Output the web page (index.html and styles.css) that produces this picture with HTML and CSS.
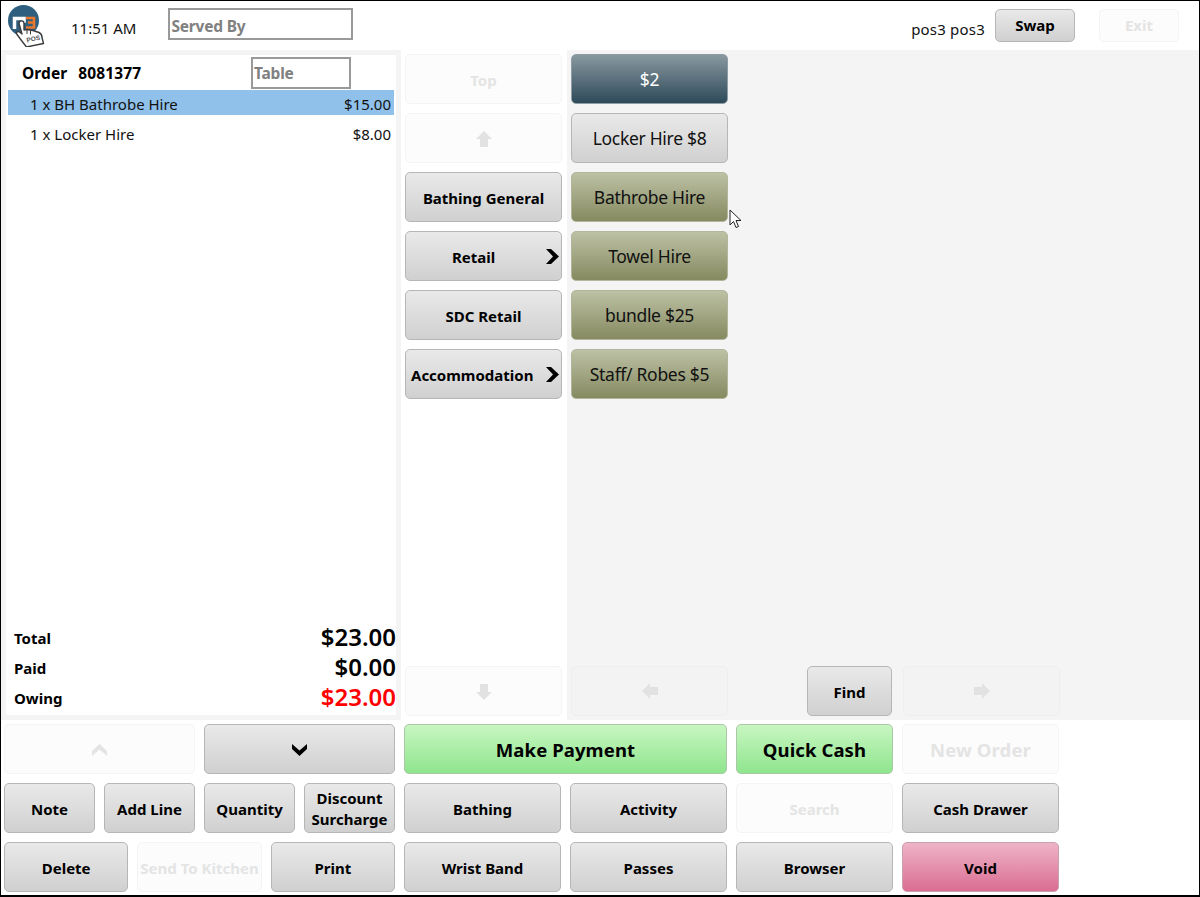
FILE: index.html
```html
<!DOCTYPE html>
<html lang="en">
<head>
<meta charset="utf-8">
<title>POS</title>
<link rel="stylesheet" href="styles.css">
</head>
<body>
<div class="app">
  <header class="top">
    <svg class="logo" viewBox="0 0 37 42" width="37" height="42">
      <circle cx="15.500" cy="15.500" r="15.500" fill="#2f5f7f"/>
      <path d="M6.500 24V13.500h9.500V18" fill="none" stroke="#fff" stroke-width="3.500"/>
      <path d="M18 13h8v9.500h-8M20 17.500h6" fill="none" stroke="#e8762b" stroke-width="2.600"/>
      <path d="M11 18.500c0-3.500 5-3.500 5 0v6.500l3-.5 3 .5 3 .5 6 2c2 1 3 3 3 5l1.500 6-17 3.500-3.500-4.500-6-8c-1.500-2.500 1-3.500 2.500-2.500l2.500 2z" fill="#fff" stroke="#3c3c3c" stroke-width="1.400" stroke-linejoin="round"/>
      <path d="M19 25v4M22.500 25.500v4" stroke="#3c3c3c" stroke-width="1"/>
      <text class="logo-text" x="19" y="37.500" transform="rotate(-12 19 37.500)">POS</text>
    </svg>
    <span class="time">11:51 AM</span>
    <div class="field served">Served By</div>
    <span class="user">pos3 pos3</span>
    <button class="btn top-btn">Swap</button>
    <button class="btn top-btn off exit">Exit</button>
  </header>

  <main class="main">
    <section class="order-col">
      <div class="panel">
        <div class="order-head">
          <span class="order-label">Order</span>
          <span class="order-no">8081377</span>
          <div class="field table">Table</div>
        </div>
        <div class="line selected"><span>1 x BH Bathrobe Hire</span><span>$15.00</span></div>
        <div class="line"><span>1 x Locker Hire</span><span>$8.00</span></div>
        <div class="totals">
          <div class="total"><span>Total</span><strong>$23.00</strong></div>
          <div class="total"><span>Paid</span><strong>$0.00</strong></div>
          <div class="total owing"><span>Owing</span><strong>$23.00</strong></div>
        </div>
      </div>
    </section>

    <section class="cat-col">
      <button class="btn cat off">Top</button>
      <button class="btn cat off"><svg class="arrow" viewBox="0 0 16 16" width="16" height="16"><path d="M8 0l8 8h-4v8H4V8H0z"/></svg></button>
      <button class="btn cat">Bathing General</button>
      <button class="btn cat more"><span class="lbl-retail">Retail</span><svg class="chev" viewBox="0 0 13 15" width="13" height="15"><path d="M0 0h5l8 7.500-8 7.500H0l7-7.500z"/></svg></button>
      <button class="btn cat">SDC Retail</button>
      <button class="btn cat more"><span>Accommodation</span><svg class="chev" viewBox="0 0 13 15" width="13" height="15"><path d="M0 0h5l8 7.500-8 7.500H0l7-7.500z"/></svg></button>
      <button class="btn cat off cat-down"><svg class="arrow" viewBox="0 0 16 16" width="16" height="16"><path d="M4 0h8v8h4l-8 8-8-8h4z"/></svg></button>
    </section>

    <section class="prod-col">
      <button class="btn prod slate">$2</button>
      <button class="btn prod">Locker Hire $8</button>
      <button class="btn prod olive">Bathrobe Hire</button>
      <button class="btn prod olive">Towel Hire</button>
      <button class="btn prod olive">bundle $25</button>
      <button class="btn prod olive">Staff/ Robes $5</button>
      <div class="prod-foot">
        <button class="btn prod off dim"><svg class="arrow" viewBox="0 0 16 16" width="16" height="16"><path d="M0 8l8-8v4h8v8H8v4z"/></svg></button>
        <button class="btn find">Find</button>
        <button class="btn prod off dim next"><svg class="arrow" viewBox="0 0 16 16" width="16" height="16"><path d="M16 8L8 0v4H0v8h8v4z"/></svg></button>
      </div>
    </section>
  </main>

  <footer class="bottom">
    <div class="left-keys">
      <div class="key-row">
        <button class="btn key off"><svg class="chev-v off-icon" viewBox="0 0 15 12" width="15" height="12"><path d="M7.500 0L15 7v5L7.500 5.500 0 12V7z"/></svg></button>
        <button class="btn key"><svg class="chev-v" viewBox="0 0 15 12" width="15" height="12"><path d="M0 0l7.500 6.500L15 0v5l-7.500 7L0 5z"/></svg></button>
      </div>
      <div class="key-row">
        <button class="btn key">Note</button>
        <button class="btn key">Add Line</button>
        <button class="btn key">Quantity</button>
        <button class="btn key tight">Discount<br>Surcharge</button>
      </div>
      <div class="key-row">
        <button class="btn key">Delete</button>
        <button class="btn key off">Send To Kitchen</button>
        <button class="btn key">Print</button>
      </div>
    </div>
    <div class="right-keys">
      <button class="btn big green span2">Make Payment</button>
      <button class="btn big green">Quick Cash</button>
      <button class="btn big off">New Order</button>
      <button class="btn">Bathing</button>
      <button class="btn">Activity</button>
      <button class="btn off">Search</button>
      <button class="btn">Cash Drawer</button>
      <button class="btn">Wrist Band</button>
      <button class="btn">Passes</button>
      <button class="btn">Browser</button>
      <button class="btn void">Void</button>
    </div>
  </footer>

  <svg class="cursor" viewBox="0 0 13 20" width="13" height="20"><path d="M1 1v15l3.500-3.500 2.500 6 2.500-1-2.500-6H12z" fill="#fff" stroke="#222" stroke-width="1"/></svg>
</div>
</body>
</html>
```
FILE: styles.css
```css
* { box-sizing: border-box; }
html, body { margin: 0; padding: 0; background: #fff; }
body { font-family: "Noto Sans", "Open Sans", sans-serif; color: #000; }

.app {
  position: relative;
  width: 1200px;
  height: 897px;
  border: 1px solid #000;
  border-bottom-width: 2px;
  display: flex;
  flex-direction: column;
  overflow: hidden;
  background: #fff;
}

/* Buttons */
.btn {
  display: flex;
  align-items: center;
  justify-content: center;
  height: 50px;
  padding: 2px 0 0;
  font-family: inherit;
  font-size: 15px;
  font-weight: 700;
  line-height: 21px;
  color: #000;
  background: linear-gradient(#e9e9e9, #d0d0d0);
  border: 1px solid #b6b6b6;
  border-radius: 5px;
}
.btn.off {
  background: #fcfcfc;
  border-color: #f4f4f4;
  color: #e4e4e4;
}

/* Top bar */
.top {
  display: flex;
  align-items: center;
  height: 49px;
  flex: none;
  padding-left: 7px;
}
.logo { flex: none; align-self: flex-start; margin-top: 4px; }
.logo-text { font-family: "Liberation Sans", sans-serif; font-size: 6.500px; font-weight: 700; fill: #555; }
.time { margin-left: 26px; font-size: 15px; margin-top: 4px; color: #111; }
.field {
  border: 2px solid #999;
  color: #808080;
  font-weight: 700;
  font-size: 15.500px;
  letter-spacing: -0.2px;
  display: flex;
  align-items: center;
  padding-left: 1px;
}
.served { width: 185px; height: 32px; margin-left: 32px; align-self: flex-start; margin-top: 7px; padding-top: 3px; }
.user { margin-left: auto; font-size: 15px; letter-spacing: 0.2px; margin-top: 6px; color: #111; }
.top-btn { width: 80px; height: 33px; margin-left: 10px; font-size: 15px; margin-top: -1px; padding: 0; }
.exit { margin-left: 24px; margin-right: 20px; }

/* Main */
.main {
  display: flex;
  flex: none;
  height: 670px;
  background: #f4f4f4;
}
.order-col { width: 400px; flex: none; padding: 5px; }
.panel {
  height: 100%;
  background: #fff;
  padding: 0 2px;
  display: flex;
  flex-direction: column;
}
.order-head {
  display: flex;
  align-items: center;
  height: 35px;
  flex: none;
  padding-left: 14px;
  font-weight: 700;
  font-size: 15.500px;
  letter-spacing: 0.1px;
}
.order-no { margin-left: 11px; }
.table { width: 100px; height: 32px; margin-left: auto; margin-right: 43px; margin-top: 1px; padding-top: 0; }
.line {
  display: flex;
  justify-content: space-between;
  height: 25px;
  flex: none;
  margin-bottom: 5px;
  padding: 2px 3px 0 22px;
  font-size: 15px;
  line-height: 25px;
  color: #111;
}
.line.selected { background: #90c1ea; }
.totals { margin-top: auto; padding: 0 0 2px 6px; }
.total {
  display: flex;
  justify-content: space-between;
  align-items: center;
  height: 30px;
  margin-right: -2px;
  font-size: 15px;
  font-weight: 700;
}
.total strong { font-size: 24px; font-weight: 600; line-height: 30px; margin-top: -2px; }
.owing strong { color: #f00; }

.cat-col {
  width: 166px;
  flex: none;
  background: #fff;
  padding: 4px 5px 4px 4px;
  display: flex;
  flex-direction: column;
  gap: 9px;
}
.cat { width: 157px; flex: none; }
.more { justify-content: flex-start; position: relative; padding: 2px 2px 0 5px; }
.more .chev { margin-left: auto; margin-top: -2px; }
.lbl-retail { margin-left: 41px; }
.cat-down { margin-top: auto; }
.arrow { fill: #e2e2e2; }

.prod-col {
  flex: 1;
  padding: 4px 0 4px 4px;
  display: flex;
  flex-direction: column;
  gap: 9px;
}
.prod {
  width: 157px;
  flex: none;
  padding: 0;
  font-size: 17.500px;
  font-weight: 400;
  letter-spacing: -0.3px;
  color: #111;
}
.slate { background: linear-gradient(#88989f, #2e4a5a); border-color: #8e9ca3; color: #fff; }
.olive { background: linear-gradient(#bdc1a5, #858a60); border-color: #b3b69c; }
.btn.dim { background: #f3f3f3; border-color: #eeeeee; }
.prod-foot { display: flex; margin-top: auto; }
.find { width: 85px; margin-left: 79px; flex: none; }
.next { margin-left: 11px; }

/* Bottom */
.bottom {
  display: flex;
  flex: 1;
  gap: 9px;
  padding: 4px 0 0 3px;
}
.left-keys { width: 391px; flex: none; display: flex; flex-direction: column; gap: 9px; }
.key-row { display: flex; gap: 9px; }
.key { flex: 1 1 0; min-width: 0; white-space: nowrap; }
.tight { text-align: center; }
.chev-v { fill: #000; }
.off-icon { fill: #e4e4e4; }
.right-keys {
  display: grid;
  grid-template-columns: repeat(4, 157px);
  grid-auto-rows: 50px;
  gap: 9px;
  align-content: start;
}
.span2 { grid-column: span 2; }
.big { font-size: 18.500px; letter-spacing: 0.1px; padding-top: 0; }
.green { background: linear-gradient(#c8f6c2, #8fe58d); border-color: #a9c8a5; }
.void { background: linear-gradient(#eeb4c7, #db6d92); border-color: #c9a1ad; }

/* Mouse pointer lying over the page */
.cursor { position: absolute; left: 728px; top: 208px; }
```
